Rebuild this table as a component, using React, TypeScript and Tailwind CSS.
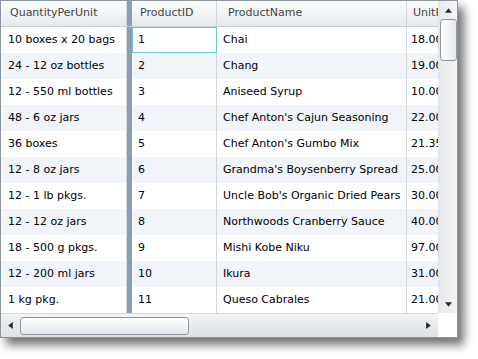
import React from 'react';

const ROWS: [string, string, string, string][] = [
  ['10 boxes x 20 bags', '1', 'Chai', '18.00'],
  ['24 - 12 oz bottles', '2', 'Chang', '19.00'],
  ['12 - 550 ml bottles', '3', 'Aniseed Syrup', '10.00'],
  ['48 - 6 oz jars', '4', "Chef Anton's Cajun Seasoning", '22.00'],
  ['36 boxes', '5', "Chef Anton's Gumbo Mix", '21.35'],
  ['12 - 8 oz jars', '6', "Grandma's Boysenberry Spread", '25.00'],
  ['12 - 1 lb pkgs.', '7', "Uncle Bob's Organic Dried Pears", '30.00'],
  ['12 - 12 oz jars', '8', 'Northwoods Cranberry Sauce', '40.00'],
  ['18 - 500 g pkgs.', '9', 'Mishi Kobe Niku', '97.00'],
  ['12 - 200 ml jars', '10', 'Ikura', '31.00'],
  ['1 kg pkg.', '11', 'Queso Cabrales', '21.00'],
];

function Arrow({ dir }: { dir: 'up' | 'down' | 'left' | 'right' }) {
  const pts = {
    up: '0,4 3,0 6,4',
    down: '0,0 6,0 3,4',
    left: '4,0 4,6 0,3',
    right: '0,0 4,3 0,6',
  }[dir];
  const vertical = dir === 'up' || dir === 'down';
  return (
    <svg width={vertical ? 7 : 5} height={vertical ? 5 : 7} viewBox={vertical ? '0 0 6 4' : '0 0 4 6'}>
      <polygon points={pts} fill="#2a2a2a" />
    </svg>
  );
}

export default function App() {
  return (
    <div
      className="w-[478px] h-[359px] bg-white overflow-hidden text-[11px]"
      style={{ fontFamily: '"DejaVu Sans", Verdana, sans-serif' }}
    >
      <div className="w-[458px] h-[338px] border border-[#8c96a0] bg-white flex flex-col shadow-[6px_7px_9px_rgba(0,0,0,0.55)]">
        <div className="flex flex-1 min-h-0">
          {/* table */}
          <div className="w-[437px] flex flex-col overflow-hidden">
            {/* header */}
            <div className="flex h-[26px] shrink-0 border-b border-[#c8ced4] bg-gradient-to-b from-[#fbfcfc] to-[#e7eaed] text-[#444]">
              <div className="w-[126px] shrink-0 border-r border-[#d2d7dc] flex items-center pl-[9px]">QuantityPerUnit</div>
              <div className="w-[5px] shrink-0 bg-[#8d9eb0]" />
              <div className="w-[85px] shrink-0 border-r border-[#d2d7dc] flex items-center pl-[8px]">ProductID</div>
              <div className="w-[190px] shrink-0 border-r border-[#d2d7dc] flex items-center pl-[11px]">ProductName</div>
              <div className="flex-1 flex items-center pl-[6px] whitespace-nowrap overflow-hidden">UnitPrice</div>
            </div>
            {/* rows */}
            {ROWS.map((r, i) => (
              <div key={r[1]} className={`flex h-[26px] shrink-0 text-black ${i % 2 ? 'bg-[#f1f4f8]' : 'bg-white'}`}>
                <div className="w-[126px] shrink-0 border-r border-[#d2d7dc] flex items-center pl-[7px] whitespace-nowrap overflow-hidden">{r[0]}</div>
                <div className="w-[5px] shrink-0 bg-[#8d9eb0]" />
                {i === 0 ? (
                  <div className="w-[85px] shrink-0 border border-[#6cc6dc] flex items-center pl-[5px] bg-white">{r[1]}</div>
                ) : (
                  <div className="w-[85px] shrink-0 border-r border-[#d2d7dc] flex items-center pl-[6px]">{r[1]}</div>
                )}
                <div className="w-[190px] shrink-0 border-r border-[#d2d7dc] flex items-center pl-[6px] whitespace-nowrap overflow-hidden">{r[2]}</div>
                <div className="flex-1 flex items-center pl-[4px] whitespace-nowrap overflow-hidden">{r[3]}</div>
              </div>
            ))}
          </div>
          {/* vertical scrollbar */}
          <div className="w-[19px] shrink-0 flex flex-col items-center bg-gradient-to-r from-[#e6e9ec] to-[#f3f4f6] border-l border-[#dfe3e7]">
            <div className="h-[18px] flex items-center justify-center">
              <Arrow dir="up" />
            </div>
            <div className="w-[17px] h-[42px] rounded-[3px] border border-[#8f98a1] bg-gradient-to-r from-[#fdfdfd] to-[#e8ebee]" />
            <div className="flex-1" />
            <div className="h-[18px] flex items-center justify-center">
              <Arrow dir="down" />
            </div>
          </div>
        </div>
        {/* bottom scrollbar */}
        <div className="flex h-[24px] shrink-0">
          <div className="w-[437px] flex items-center bg-gradient-to-b from-[#f2f4f6] to-[#dde1e5] border-t border-[#d7dce1]">
            <div className="w-[19px] flex items-center justify-center">
              <Arrow dir="left" />
            </div>
            <div className="w-[169px] h-[18px] rounded-[3px] border border-[#8f98a1] bg-gradient-to-b from-[#fdfdfd] to-[#e4e7ea]" />
            <div className="flex-1" />
            <div className="w-[19px] flex items-center justify-center">
              <Arrow dir="right" />
            </div>
          </div>
          <div className="flex-1 bg-white" />
        </div>
      </div>
    </div>
  );
}
